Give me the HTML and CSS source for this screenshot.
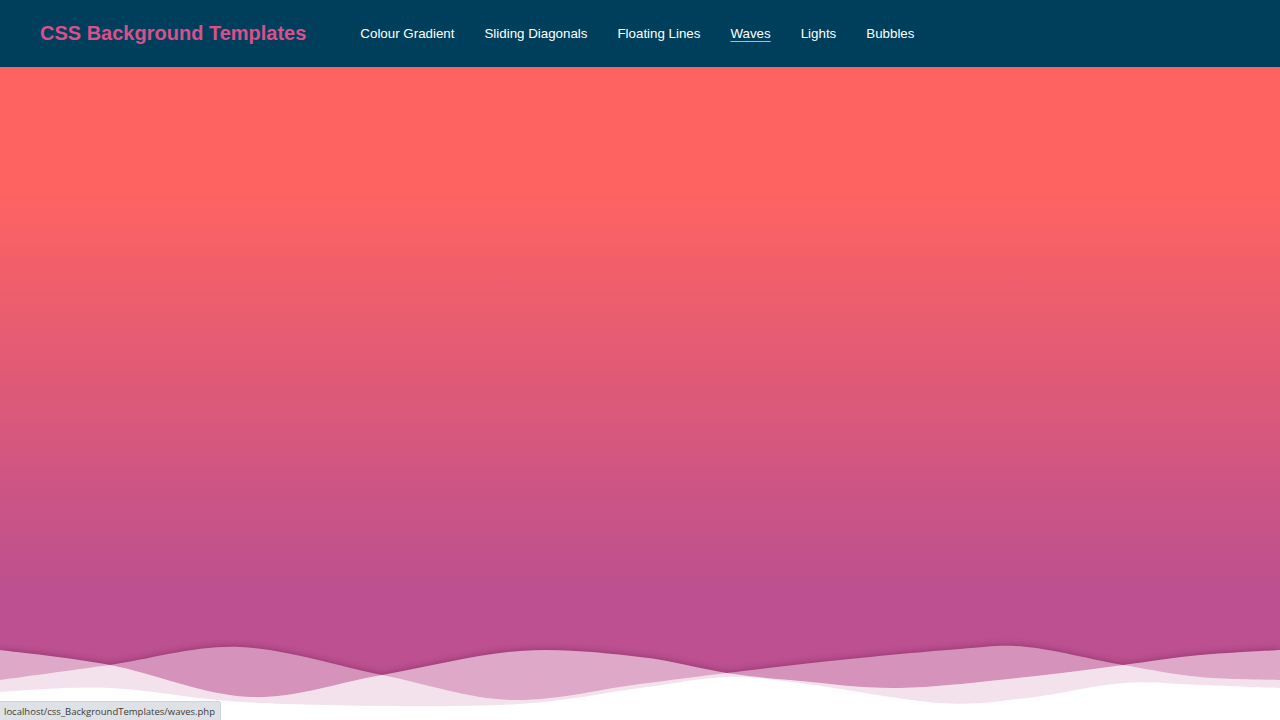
FILE: index.html
```html
<!DOCTYPE html>
<html lang="en">
<head>
<meta charset="utf-8">
<title>CSS Background Templates - Waves</title>
<link rel="stylesheet" href="styles.css">
</head>
<body>
<header class="topbar">
  <h1 class="brand">CSS Background Templates</h1>
  <nav class="nav">
    <a href="#">Colour Gradient</a>
    <a href="#">Sliding Diagonals</a>
    <a href="#">Floating Lines</a>
    <a href="#" class="active">Waves</a>
    <a href="#">Lights</a>
    <a href="#">Bubbles</a>
  </nav>
</header>
<main class="hero">
  <svg class="waves" viewBox="0 620 1280 100" preserveAspectRatio="none" xmlns="http://www.w3.org/2000/svg">
    <defs>
      <path id="waveM" d="M0 680 C18.3 677.5 70 670.5 110 665 C150 659.5 194.7 645.3 240 647 C285.3 648.7 337 666.2 382 675 C427 683.8 467 698.5 510 700 C553 701.5 603.8 688.5 640 684 C676.2 679.5 693.7 677 727 673 C760.3 669 801.2 664 840 660 C878.8 656 928.8 651.2 960 649 C991.2 646.8 999.8 644.3 1027 647 C1054.2 649.7 1094.2 660 1123 665 C1151.8 670 1173.8 674.5 1200 677 C1226.2 679.5 1266.7 679.5 1280 680 L1280 720 L0 720 Z"/>
      <path id="waveQ" d="M0 650 C18.3 652.5 68.3 657.2 110 665 C151.7 672.8 204.7 695.3 250 697 C295.3 698.7 337 682.7 382 675 C427 667.3 477 654 520 651 C563 648 605.5 653.3 640 657 C674.5 660.7 700.3 669 727 673 C753.7 677 771.2 678.5 800 681 C828.8 683.5 862.2 688.7 900 688 C937.8 687.3 989.8 680.8 1027 677 C1064.2 673.2 1094.2 668.7 1123 665 C1151.8 661.3 1173.8 657.5 1200 655 C1226.2 652.5 1266.7 650.8 1280 650 L1280 720 L0 720 Z"/>
      <clipPath id="clipM">
        <use href="#waveM"/>
      </clipPath>
      <filter id="edgeShadow" x="-5%" y="-40%" width="110%" height="180%" color-interpolation-filters="sRGB">
        <feGaussianBlur in="SourceAlpha" stdDeviation="3" result="blur"/>
        <feOffset in="blur" dy="-1" result="off"/>
        <feFlood flood-color="#6a1a4e" flood-opacity="0.45"/>
        <feComposite in2="off" operator="in" result="shadow"/>
        <feComposite in="shadow" in2="SourceAlpha" operator="out"/>
      </filter>
    </defs>
    <g filter="url(#edgeShadow)">
      <use href="#waveM" fill="#000"/>
      <use href="#waveQ" fill="#000"/>
    </g>
    <use href="#waveM" fill="#fff" fill-opacity="0.38"/>
    <use href="#waveQ" fill="#fff" fill-opacity="0.5"/>
    <use href="#waveQ" fill="#fff" fill-opacity="0.45" clip-path="url(#clipM)"/>
    <path fill="#fff" d="M0 692 C18.3 691.3 66.7 686.2 110 688 C153.3 689.8 195 700.2 260 703 C325 705.8 436.7 707.5 500 705 C563.3 702.5 602.2 692.7 640 688 C677.8 683.3 700.3 677.8 727 677 C753.7 676.2 764.5 678.7 800 683 C835.5 687.3 902.2 700.5 940 703 C977.8 705.5 996.5 701.3 1027 698 C1057.5 694.7 1094.2 685.2 1123 683 C1151.8 680.8 1173.8 684.2 1200 685 C1226.2 685.8 1266.7 687.5 1280 688 L1280 720 L0 720 Z"/>
  </svg>
</main>
<div class="status">localhost/css_BackgroundTemplates/waves.php</div>
</body>
</html>
```
FILE: styles.css
```css
html, body {
  margin: 0;
  height: 100%;
}

body {
  display: flex;
  flex-direction: column;
  overflow: hidden;
  font-family: "Liberation Sans", Arial, sans-serif;
}

.topbar {
  flex: none;
  height: 67px;
  padding: 0 40px;
  display: flex;
  align-items: center;
  background: #003f5c;
}

.brand {
  margin: 0;
  font-size: 20px;
  font-weight: 700;
  color: #d9508a;
}

.nav {
  display: flex;
  gap: 30px;
  margin-left: 54px;
}

.nav a {
  color: #ffffff;
  text-decoration: none;
  font-size: 13.33px;
}

.nav a.active {
  text-decoration: underline;
  text-decoration-color: #a9bccb;
  text-underline-offset: 3px;
}

.hero {
  flex: 1;
  position: relative;
  background: linear-gradient(to bottom, #ff6361 123px, #bc5090 523px);
}

.waves {
  position: absolute;
  left: 0;
  bottom: 0;
  display: block;
  width: 100%;
  height: 100px;
}

.status {
  position: fixed;
  left: 0;
  bottom: 0;
  height: 18px;
  padding: 0 5px 0 4px;
  display: flex;
  align-items: center;
  background: #dee1e6;
  border-top: 1px solid #d0d3d8;
  border-right: 1px solid #d0d3d8;
  border-top-right-radius: 3px;
  color: #3c3c3c;
  font-family: "Open Sans", "Noto Sans", sans-serif;
  font-size: 9.5px;
}
```
